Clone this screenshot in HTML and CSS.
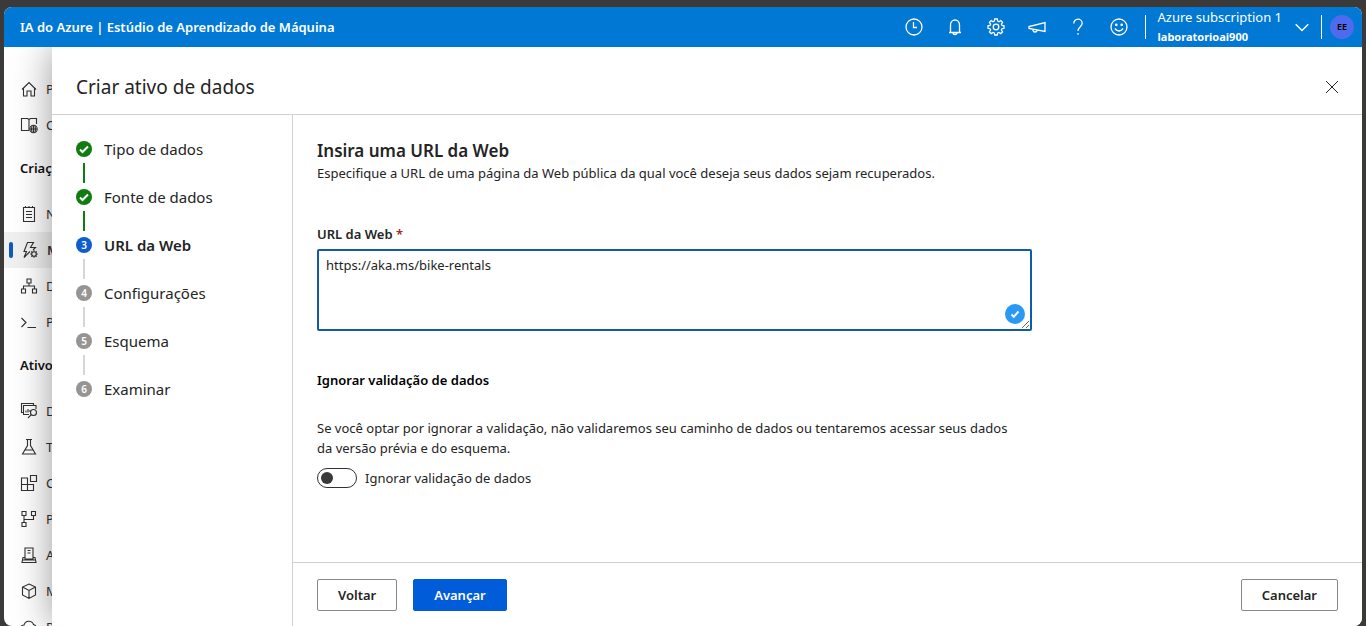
FILE: index.html
```html
<!DOCTYPE html>
<html lang="pt-BR">
<head>
<meta charset="utf-8">
<title>IA do Azure | Estúdio de Aprendizado de Máquina</title>
<link rel="stylesheet" href="styles.css">
</head>
<body>
<div class="app">
  <header class="topbar">
    <h1 class="brand">IA do Azure | Estúdio de Aprendizado de Máquina</h1>
    <div class="tools">
      <button class="tool" aria-label="Recentes"><svg class="icon" viewBox="0 0 20 20"><circle cx="10" cy="10" r="8"/><path d="M9.500 5v5.500H13"/></svg></button>
      <button class="tool" aria-label="Notificações"><svg class="icon" viewBox="0 0 20 20"><path d="M4 15.500h12M5.500 15.500V8a4.500 5 0 0 1 9 0v7.500M8 15.500a2 2 0 0 0 4 0"/></svg></button>
      <button class="tool" aria-label="Configurações"><svg class="icon" viewBox="0 0 20 20"><circle cx="10" cy="10" r="2.800"/><path d="M8.700 2h2.600l.4 2.100 1.300.6 1.800-1.200 1.800 1.800-1.200 1.800.6 1.300 2 .4v2.500l-2 .4-.6 1.300 1.200 1.800-1.800 1.800-1.800-1.200-1.300.6-.4 2H8.700l-.4-2-1.300-.6-1.800 1.200-1.800-1.800 1.200-1.800-.6-1.300-2-.4V8.800l2-.4.6-1.300-1.200-1.800 1.800-1.800L7 4.700l1.300-.6z"/></svg></button>
      <button class="tool" aria-label="Comentários"><svg class="icon" viewBox="0 0 20 20"><path d="M18 5.500v9L2 11.500V9.500zM6 12.300v1.200q.3 1.500 2 1.500t2.300-1.800"/></svg></button>
      <button class="tool" aria-label="Ajuda"><svg class="icon" viewBox="0 0 20 20"><path d="M5.800 6.500a4.200 4.200 0 0 1 8.400-.2c0 3.200-4.200 3.700-4.200 7.700M10 16v1.800"/></svg></button>
      <button class="tool" aria-label="Opinião"><svg class="icon" viewBox="0 0 20 20"><circle cx="10" cy="10" r="8"/><path d="M5.800 11.500q4.200 5 8.400 0"/><circle class="fill" cx="7.300" cy="7.800" r=".7"/><circle class="fill" cx="12.700" cy="7.800" r=".7"/></svg></button>
    </div>
    <button class="account">
      <span class="account-text"><span>Azure subscription 1</span><strong>laboratorioai900</strong></span>
      <svg class="icon" viewBox="0 0 20 20"><path d="m3 7 7 7 7-7"/></svg>
    </button>
    <div class="profile"><button class="avatar">EE</button></div>
  </header>
  <div class="body">
    <nav class="sidebar" aria-label="Navegação">
      <a class="nav-item" href="#"><svg class="icon" viewBox="0 0 18 18"><path d="M2 9.500 9 2.500l7 7M3.500 8.500V16H7v-5h4v5h3.500V8.500"/></svg>Página Inicial</a>
      <a class="nav-item" href="#"><svg class="icon" viewBox="0 0 18 18"><path d="M9 14.500H1.500v-12h6L9 3.500l1.500-1h6V8M9 3.500v11"/><circle cx="13.500" cy="13" r="3.700"/><path d="M13.500 9.500v7M10 13h7M12 10q-1 3 0 6M15 10q1 3 0 6"/></svg>Catálogo de modelos</a>
      <h2 class="nav-title">Criação</h2>
      <a class="nav-item" href="#"><svg class="icon" viewBox="0 0 18 18"><path d="M3.500 2.500h11v14h-11zM6 6.500h6M6 9.500h6M6 12.500h6M5.500 1v2M9 1v2M12.500 1v2"/></svg>Notebooks</a>
      <a class="nav-item current" href="#" aria-current="page"><svg class="icon" viewBox="0 0 18 18"><path d="M9 10.500 3 16.500l2.500-6H3L6.500 1.500h6L9.500 6.500h5L12 9"/><circle cx="13" cy="13" r="2.300"/><path d="M13 9.200v1.500M13 15.300v1.500M9.200 13h1.500M15.300 13h1.500M10.300 10.300l1 1M14.700 14.700l1 1M15.700 10.300l-1 1M11.300 14.700l-1 1"/></svg>ML Automatizado</a>
      <a class="nav-item" href="#"><svg class="icon" viewBox="0 0 18 18"><path d="M7 2h4v4H7zM1.500 12h4v4h-4zM12.500 12h4v4h-4zM9 6v3M3.500 12V9h11v3"/></svg>Designer</a>
      <a class="nav-item" href="#"><svg class="icon" viewBox="0 0 18 18"><path d="m1.500 5 4.500 4.500L1.500 14M7.500 14.500H16"/></svg>Prompt flow</a>
      <h2 class="nav-title">Ativos</h2>
      <a class="nav-item" href="#"><svg class="icon" viewBox="0 0 18 18"><path d="M3 10.500H1.500v-9h12V3M9 12.500H3.500v-9h12.500V7M6 8.500v2M8 7v3.500M10 8v2"/><circle cx="13.500" cy="10.500" r="3"/><path d="M11.300 12.700 8 16"/></svg>Dados</a>
      <a class="nav-item" href="#"><svg class="icon" viewBox="0 0 18 18"><path d="M6 1.500h6M7.500 1.500v6L2.500 16h13l-5-8.500v-6M5 12h8"/></svg>Trabalhos</a>
      <a class="nav-item" href="#"><svg class="icon" viewBox="0 0 18 18"><path d="M1.500 4h6v12.500h-6zM1.500 10.500h12v6h-12M10.500 1.500h6v6h-6z"/></svg>Componentes</a>
      <a class="nav-item" href="#"><svg class="icon" viewBox="0 0 18 18"><path d="M2 1.500h4v4H2zM11.500 1.500h4v4h-4zM2 12.500h4v4H2zM4 5.500v7M4 9.500h9.500v-4"/></svg>Pipelines</a>
      <a class="nav-item" href="#"><svg class="icon" viewBox="0 0 18 18"><path d="M5 13V2h8v11zM7.500 4.500h3M7.500 7h3M5 11.500H3l-1 5h14l-1-5h-2M2.500 14h13"/></svg>Ambiente</a>
      <a class="nav-item" href="#"><svg class="icon" viewBox="0 0 18 18"><path d="m9 2 6.500 3v8L9 16.500 2.500 13V5zM2.500 5 9 8.500 15.500 5M9 8.500v8"/></svg>Modelos</a>
      <a class="nav-item" href="#"><svg class="icon" viewBox="0 0 18 18"><path d="M5 14H4a3.500 3.500 0 0 1 0-7 5 5 0 0 1 9.500-.5A4 4 0 0 1 14 14M8 10h6v4"/></svg>Pontos de extremidade</a>
    </nav>
    <main class="panel">
      <div class="panel-head">
        <h2 class="panel-title">Criar ativo de dados</h2>
        <button class="close" aria-label="Fechar"><svg class="icon" viewBox="0 0 14 14"><path d="m1 1 12 12M13 1 1 13"/></svg></button>
      </div>
      <div class="panel-body">
        <ol class="steps">
          <li class="step done"><span class="marker"><svg viewBox="0 0 16 16"><path d="m4 8.500 2.500 2.500L12 5.500"/></svg></span>Tipo de dados</li>
          <li class="step done"><span class="marker"><svg viewBox="0 0 16 16"><path d="m4 8.500 2.500 2.500L12 5.500"/></svg></span>Fonte de dados</li>
          <li class="step active" aria-current="step"><span class="marker">3</span>URL da Web</li>
          <li class="step"><span class="marker">4</span>Configurações</li>
          <li class="step"><span class="marker">5</span>Esquema</li>
          <li class="step"><span class="marker">6</span>Examinar</li>
        </ol>
        <form class="form">
          <div class="fields">
            <h3 class="form-title">Insira uma URL da Web</h3>
            <p class="text">Especifique a URL de uma página da Web pública da qual você deseja seus dados sejam recuperados.</p>
            <label class="label" for="url">URL da Web <span class="required">*</span></label>
            <div class="url-box">
              <textarea class="url" id="url" spellcheck="false">https://aka.ms/bike-rentals</textarea>
              <svg class="valid" viewBox="0 0 20 20"><circle cx="10" cy="10" r="10"/><path d="m6.500 10.500 2.300 2.300 4.700-5.300"/></svg>
            </div>
            <h4 class="section-title">Ignorar validação de dados</h4>
            <p class="text">Se você optar por ignorar a validação, não validaremos seu caminho de dados ou tentaremos acessar seus dados da versão prévia e do esquema.</p>
            <div class="toggle-row">
              <input class="toggle" type="checkbox" role="switch" id="skip">
              <label for="skip">Ignorar validação de dados</label>
            </div>
          </div>
          <div class="actions">
            <button class="btn" type="button">Voltar</button>
            <button class="btn primary" type="button">Avançar</button>
            <button class="btn cancel" type="button">Cancelar</button>
          </div>
        </form>
      </div>
    </main>
  </div>
</div>
</body>
</html>
```

FILE: styles.css
```css
* { box-sizing: border-box; }
body {
  margin: 0;
  background: #3b3a39;
  color: #242424;
  font: 13px/20px "Noto Sans", "Open Sans", sans-serif;
}
h1, h2, h3, h4, p, ol { margin: 0; padding: 0; font-weight: 600; }
p { font-weight: 400; }
button, textarea { font: inherit; color: inherit; }
button { padding: 0; border: 0; background: none; }
.icon { flex: none; fill: none; stroke: currentColor; stroke-width: 1.1; }
.icon .fill { fill: currentColor; }

.app {
  display: flex;
  flex-direction: column;
  height: calc(100vh - 7px);
  margin: 7px 4px 0;
  border-radius: 8px;
  overflow: hidden;
  background: #fff;
}
.topbar {
  display: flex;
  align-items: center;
  flex: none;
  z-index: 2;
  height: 40px;
  padding: 0 8px 0 16px;
  background: #0078d4;
  color: #fff;
}
.brand { flex: 1; font-size: 13px; }
.tools { display: flex; }
.tool { display: grid; place-items: center; width: 41px; height: 40px; }
.tool .icon { width: 20px; height: 20px; stroke-width: 1.3; }
.account {
  display: flex;
  align-items: center;
  gap: 11px;
  height: 24px;
  margin-left: 5px;
  padding: 0 10px 0 12px;
  border: solid #fff;
  border-width: 0 1px;
  text-align: left;
}
.account-text { display: flex; flex-direction: column; font-size: 13px; }
.account-text strong { font-size: 11px; }
.account .icon { width: 18px; height: 18px; stroke-width: 1.5; }
.profile { padding-left: 8px; }
.avatar {
  display: grid;
  place-items: center;
  width: 24px;
  height: 24px;
  border-radius: 50%;
  background: #4f6bed;
  color: #000;
  font-size: 9px;
  font-weight: 600;
}

.body { display: flex; flex: 1; min-height: 0; }
.sidebar {
  flex: none;
  width: 48px;
  padding-top: 24px;
  overflow: hidden;
  white-space: nowrap;
}
.nav-item {
  display: flex;
  align-items: center;
  gap: 8px;
  height: 36px;
  padding-left: 16px;
  color: #323130;
  text-decoration: none;
}
.nav-item .icon { width: 18px; height: 18px; }
.nav-item.current {
  padding-left: 5px;
  background: #f0f0f0;
  font-weight: 600;
}
.nav-item.current::before {
  content: "";
  flex: none;
  width: 4px;
  height: 16px;
  border-radius: 2px;
  background: #0f5bbd;
}
.nav-title { padding: 15px 0 18px 16px; font-size: 13px; color: #111; }

.panel {
  display: flex;
  flex-direction: column;
  flex: 1;
  min-width: 0;
  z-index: 1;
  background: #fff;
  box-shadow: 0 0 36px rgba(0, 0, 0, .4);
}
.panel-head {
  display: flex;
  align-items: center;
  justify-content: space-between;
  flex: none;
  height: 68px;
  padding: 12px 23px 0 24px;
  border-bottom: 1px solid #d1d1d1;
}
.panel-title { font-size: 19px; font-weight: 400; }
.close { display: grid; place-items: center; }
.close .icon { width: 14px; height: 14px; stroke-width: 1; }
.panel-body { display: flex; flex: 1; min-height: 0; }

.steps {
  flex: none;
  width: 241px;
  padding: 23px 0 0 24px;
  border-right: 1px solid #d1d1d1;
  list-style: none;
}
.step {
  display: grid;
  grid-template-columns: 16px 1fr;
  grid-template-rows: 22px 26px;
  align-items: center;
  column-gap: 12px;
  font-size: 15px;
  font-weight: 400;
}
.step:not(:last-child)::after {
  content: "";
  justify-self: center;
  width: 2px;
  height: 20px;
  background: #d6d6d6;
}
.marker {
  display: grid;
  place-items: center;
  width: 16px;
  height: 16px;
  border-radius: 50%;
  background: #979593;
  color: #fff;
  font-size: 10px;
  font-weight: 600;
  line-height: 16px;
}
.marker svg { width: 16px; fill: none; stroke: #fff; stroke-width: 2; }
.step.done .marker, .step.done::after { background: #107c10; }
.step.active { font-weight: 600; }
.step.active .marker { background: #0f5bd0; }

.form { display: flex; flex-direction: column; flex: 1; min-width: 0; }
.fields { flex: 1; max-width: 763px; padding: 24px; }
.form-title { font-size: 17px; line-height: 24px; }
.text { max-width: 704px; }
.label { display: block; margin: 41px 0 5px; font-weight: 600; }
.required { color: #a4262c; }
.url-box { position: relative; }
.url {
  display: block;
  width: 100%;
  height: 82px;
  padding: 4px 7px;
  border: 2px solid #0f5ba8;
  border-radius: 2px;
  outline: 0;
  resize: vertical;
}
.valid { position: absolute; right: 7px; bottom: 7px; width: 20px; height: 20px; fill: #2899f5; }
.valid path { fill: none; stroke: #fff; stroke-width: 2; }
.section-title { margin: 39px 0 28px; font-size: 13px; color: #000; }
.toggle-row { display: flex; align-items: center; gap: 8px; margin-top: 10px; }
.toggle {
  appearance: none;
  display: flex;
  align-items: center;
  width: 40px;
  height: 20px;
  margin: 0;
  padding: 0 3px;
  border: 1px solid #323130;
  border-radius: 10px;
}
.toggle::before {
  content: "";
  width: 12px;
  height: 12px;
  border-radius: 50%;
  background: #3b3a39;
}
.toggle:checked { justify-content: flex-end; }
.actions {
  display: flex;
  gap: 16px;
  flex: none;
  padding: 16px 24px 15px;
  border-top: 1px solid #d1d1d1;
}
.btn {
  height: 32px;
  padding: 0 20px;
  border: 1px solid #8a8886;
  border-radius: 2px;
  font-weight: 600;
}
.btn.primary { border-color: #015cda; background: #015cda; color: #fff; }
.btn.cancel { margin-left: auto; }
```
